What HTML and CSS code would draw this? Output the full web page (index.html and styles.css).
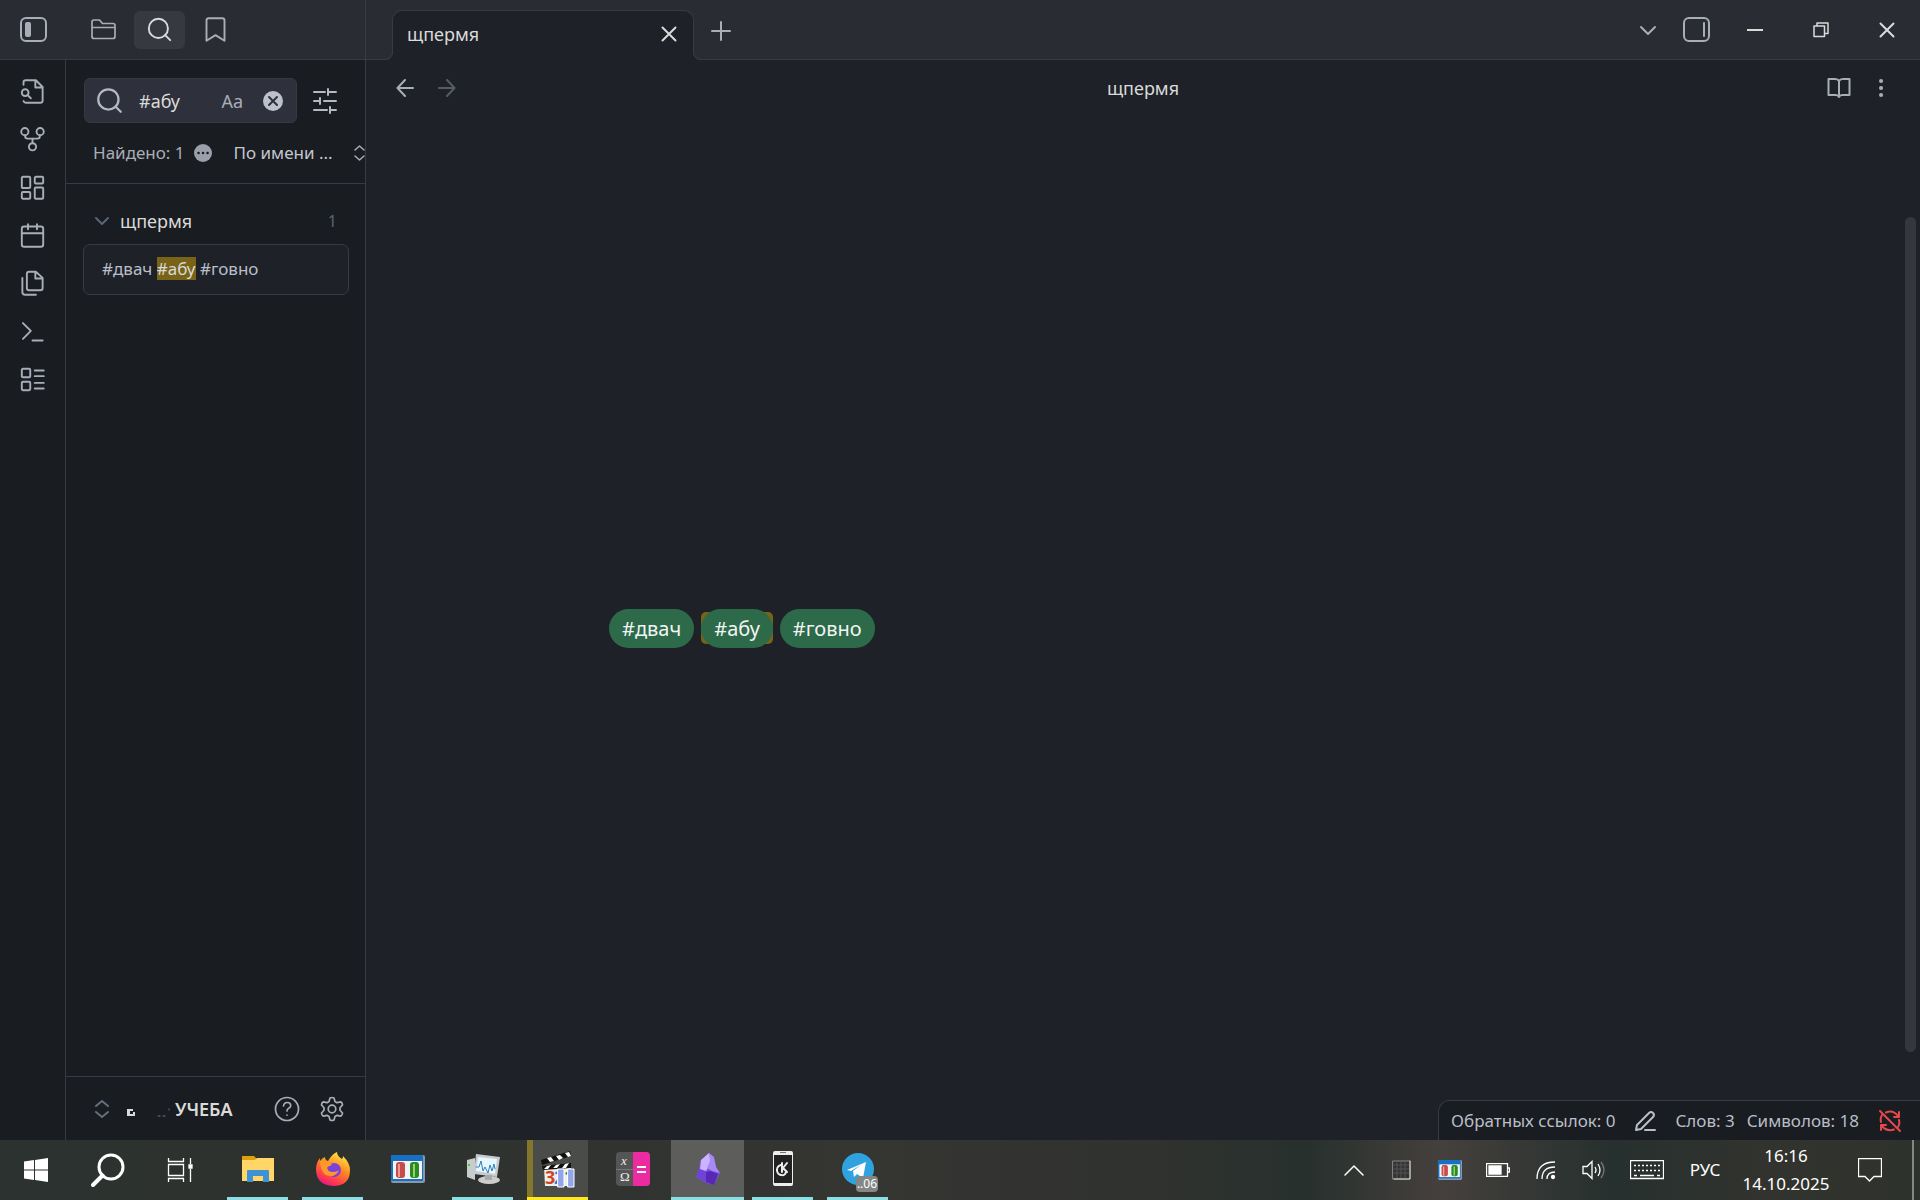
FILE: index.html
```
<!DOCTYPE html>
<html lang="ru">
<head>
    <meta charset="UTF-8">
    <meta name="viewport" content="width=device-width, initial-scale=1.0">
    <title>щпермя</title>
    <link rel="stylesheet" href="styles.css">
</head>
<body>
    <header class="titlebar">
        <div class="titlebar-left">
            <button class="panel-toggle" aria-label="Левая панель">
                <svg width="27" height="25" viewBox="0 0 27 25"><rect x="1" y="1" width="25" height="23" rx="5" /><rect x="5" y="5" width="6" height="15" rx="2" fill="currentColor" stroke="none" /></svg>
            </button>
            <button class="side-tab" aria-label="Файлы">
                <svg width="27" height="27" viewBox="0 0 27 27"><path d="M2 20.500V6q0-2 2-2h5.500l3 3.500H23q2 0 2 2v11q0 2-2 2H4q-2 0-2-2zM2 11.500h23" /></svg>
            </button>
            <button class="side-tab active" aria-label="Поиск">
                <svg width="27" height="27" viewBox="0 0 24 24"><circle cx="11" cy="11" r="8.500" /><path d="M21.500 21.500l-4.500-4.500" /></svg>
            </button>
            <button class="side-tab" aria-label="Закладки">
                <svg width="27" height="27" viewBox="0 0 24 24"><path d="M20 22l-8-5-8 5V4q0-2 2-2h12q2 0 2 2z" /></svg>
            </button>
        </div>
        <div class="tabs">
            <div class="tab">
                <span>щпермя</span>
                <button aria-label="Закрыть вкладку"><svg width="16" height="16" viewBox="0 0 16 16"><path d="M1.500 1.500l13 13M14.500 1.500l-13 13" /></svg></button>
            </div>
            <button class="new-tab" aria-label="Новая вкладка"><svg width="20" height="20" viewBox="0 0 20 20"><path d="M10 1v18M1 10h18" /></svg></button>
        </div>
        <div class="titlebar-right">
            <button class="tab-list" aria-label="Список вкладок"><svg width="18" height="18" viewBox="0 0 18 18"><path d="M2 6l7 7 7-7" /></svg></button>
            <button class="right-toggle" aria-label="Правая панель"><svg width="27" height="25" viewBox="0 0 27 25"><rect x="1" y="1" width="25" height="23" rx="5" /><rect x="20" y="5" width="2" height="15" rx="1" fill="currentColor" stroke="none" /></svg></button>
            <button class="window-button" aria-label="Свернуть"><svg width="16" height="16" viewBox="0 0 16 16"><path d="M0 8h16" /></svg></button>
            <button class="window-button" aria-label="Восстановить"><svg width="16" height="16" viewBox="0 0 16 16"><path d="M1 4h10.500v10.500H1zM4 4V1h11v10.500h-3.500" stroke-width="1.500" /></svg></button>
            <button class="window-button" aria-label="Закрыть"><svg width="16" height="16" viewBox="0 0 16 16"><path d="M1.500 1.500l13 13M14.500 1.500l-13 13" /></svg></button>
        </div>
    </header>

    <div class="workspace">
        <nav class="ribbon">
            <button aria-label="Быстрый переход"><svg width="27" height="27" viewBox="0 0 24 24"><path d="M4 6V4q0-2 2-2h9l6 6v12q0 2-2 2H6q-1.500 0-2-1.500M14.500 2v6.500H21" /><circle cx="5.500" cy="13" r="3" /><path d="M7.500 15l3 3" /></svg></button>
            <button aria-label="Граф"><svg width="27" height="27" viewBox="0 0 24 24"><circle cx="12" cy="18.500" r="3.200" /><circle cx="5.200" cy="5" r="3.200" /><circle cx="18.800" cy="5" r="3.200" /><path d="M18.500 8.200v1q0 2-2 2h-9q-2 0-2-2v-1M12 11.500v3.500" /></svg></button>
            <button aria-label="Холст"><svg width="27" height="27" viewBox="0 0 24 24"><rect x="2.500" y="2.500" width="7.500" height="10" rx="1" /><rect x="14" y="2.500" width="7.500" height="6" rx="1" /><rect x="14" y="12" width="7.500" height="10" rx="1" /><rect x="2.500" y="16" width="7.500" height="6" rx="1" /></svg></button>
            <button aria-label="Заметка дня"><svg width="27" height="27" viewBox="0 0 24 24"><rect x="2.500" y="4" width="19" height="18" rx="2" /><path d="M2.500 10h19M8 2v4.500M16 2v4.500" /></svg></button>
            <button aria-label="Шаблон"><svg width="27" height="27" viewBox="0 0 24 24"><path d="M15 1.500H9q-2 0-2 2v12.500q0 2 2 2h10q2 0 2-2V7zM14.500 1.500v6H21M3 7v12.500q0 2.500 2.500 2.500H15" /></svg></button>
            <button aria-label="Команды"><svg width="27" height="27" viewBox="0 0 24 24"><path d="M3.500 4.500l7 7-7 7M12 20h9" /></svg></button>
            <button aria-label="Базы"><svg width="27" height="27" viewBox="0 0 24 24"><rect x="2.500" y="2.500" width="7.500" height="7.500" rx="1" /><rect x="2.500" y="14" width="7.500" height="7.500" rx="1" /><path d="M14 4h8M14 9h8M14 15h8M14 20h8" /></svg></button>
        </nav>

        <aside class="sidebar">
            <div class="search-row">
                <div class="search-box">
                    <svg width="27" height="27" viewBox="0 0 24 24"><circle cx="11" cy="11" r="9" /><path d="M22 22l-4.500-4.500" /></svg>
                    <input type="text" value="#абу" aria-label="Поиск">
                    <button class="match-case" aria-label="Учитывать регистр">Aa</button>
                    <button aria-label="Очистить"><svg width="20" height="20" viewBox="0 0 20 20"><circle cx="10" cy="10" r="10" fill="#bcc1cc" stroke="none" /><path d="M6 6l8 8M14 6l-8 8" stroke="#2e313b" /></svg></button>
                </div>
                <button class="search-settings" aria-label="Настройки поиска"><svg width="24" height="26" viewBox="0 0 24 26"><path d="M1 4h11M15 1v6M16 4h7M1 13h6M7 10v6M11 13h12M1 22h13M17 19v6M17 22h6" /></svg></button>
            </div>
            <div class="result-info">
                <span>Найдено: 1</span>
                <svg width="18" height="18" viewBox="0 0 18 18"><circle cx="9" cy="9" r="9" fill="#9a9fa9" stroke="none" /><path d="M4.500 9h.1M9 9h.1M13.500 9h.1" stroke="#191c20" stroke-width="2.500" /></svg>
                <select aria-label="Сортировка"><option>По имени ...</option></select>
                <svg class="sort-arrows" width="11" height="18" viewBox="0 0 11 18"><path d="M1 6l4.500-4L10 6M1 12l4.500 4 4.500-4" /></svg>
            </div>
            <div class="results">
                <div class="result-title">
                    <svg width="16" height="16" viewBox="0 0 16 16"><path d="M2 5l6 6 6-6" /></svg>
                    <span>щпермя</span>
                    <small>1</small>
                </div>
                <div class="result-match">#двач <mark>#абу</mark> #говно</div>
            </div>
            <footer class="vault">
                <svg class="vault-arrows" width="14" height="20" viewBox="0 0 14 20"><path d="M1 7l6-5 6 5M1 13l6 5 6-5" /></svg>
                <svg class="vault-mark" width="48" height="22" viewBox="0 0 48 22"><path d="M2 11h6v2H5v3h3v-2h2v4H2z" fill="#dadada" stroke="none" /><path d="M33 18h2M38 18h2M44 11v1" stroke="#777" stroke-width="1" /></svg>
                <strong>УЧЕБА</strong>
                <button aria-label="Справка"><svg width="26" height="26" viewBox="0 0 26 26"><circle cx="13" cy="13" r="11.500" /><path d="M9.500 10q.5-3.500 3.800-3.500 3.400 0 3.400 3.200 0 1.500-2 2.600-1.700 1-1.700 2.700M13 19v.1" /></svg></button>
                <button aria-label="Настройки"><svg width="26" height="26" viewBox="0 0 26 26"><path d="M11 2q2-1 4 0l1 3.500 2 1.200 3.700-.9q1.700 1 1.800 3.200L21 11.800v2.400l2.500 2.800q-.1 2.200-1.800 3.200l-3.700-.9-2 1.200-1 3.500q-2 1-4 0l-1-3.500-2-1.200-3.700.9Q2.600 19.200 2.500 17L5 14.200v-2.400L2.500 9q.1-2.200 1.800-3.200l3.700.9 2-1.200z" /><circle cx="13" cy="13" r="3.800" /></svg></button>
            </footer>
        </aside>

        <main class="view">
            <div class="view-header">
                <div class="view-nav">
                    <button aria-label="Назад"><svg width="18" height="18" viewBox="0 0 18 18"><path d="M17 9H2M9 1L1.500 9 9 17" /></svg></button>
                    <button aria-label="Вперёд" disabled><svg width="18" height="18" viewBox="0 0 18 18"><path d="M1 9h15M9 1l7.500 8L9 17" /></svg></button>
                </div>
                <span class="view-title">щпермя</span>
                <div class="view-actions">
                    <button aria-label="Режим чтения"><svg width="24" height="22" viewBox="0 0 24 22"><path d="M12 4v16M12 4q-1-2-4-2H1.500v16H9q2 0 3 2 1-2 3-2h7.500V2H16q-3 0-4 2z" /></svg></button>
                    <button aria-label="Ещё"><svg width="6" height="20" viewBox="0 0 6 20"><path d="M3 3h.1M3 10h.1M3 17h.1" stroke-width="4" /></svg></button>
                </div>
            </div>
            <div class="editor">
                <p class="note"><a href="#" class="tag">#двач</a><span class="found"><a href="#" class="tag">#абу</a></span><a href="#" class="tag">#говно</a></p>
                <div class="scroll-thumb"></div>
            </div>
            <div class="status-bar">
                <span>Обратных ссылок: 0</span>
                <svg width="22" height="22" viewBox="0 0 22 22"><path d="M2 20l1-5L15 3q2-2 4 0t0 4L7 19zM11 20h10" /></svg>
                <span>Слов: 3</span>
                <span>Символов: 18</span>
                <svg class="sync-off" width="24" height="24" viewBox="0 0 24 24"><path d="M2 2l20 20M8 3.500q7-3 12 3.500M21 3v5h-5M3 13q-1-4 1-7M21 11q1 4-1 7M3 21v-5h5M4 17q5 6 12 3.500" /></svg>
            </div>
        </main>
    </div>

    <div class="taskbar">
        <button class="system" aria-label="Пуск"><svg width="24" height="24" viewBox="0 0 24 24"><path d="M0 3.500l10-1.500v9.500H0zM11 2l13-2v11.500H11zM0 12.500h10V22L0 20.500zM11 12.500h13V24l-13-2z" fill="#fff" stroke="none" /></svg></button>
        <button class="system" aria-label="Поиск в системе"><svg width="34" height="34" viewBox="0 0 34 34"><circle cx="20" cy="14" r="12" stroke-width="3" /><path d="M11.500 22.500L2 32" stroke-width="4" /></svg></button>
        <button class="system" aria-label="Представление задач"><svg class="thin" width="26" height="24" viewBox="0 0 26 24"><path d="M1.500 0v3.500h15V0M1.500 6.500h15v11h-15zM1.500 24v-3.500h15V24M23.500 0v6M23.500 11v13" /><path d="M22 7h3v3h-3z" fill="#fff" /></svg></button>

        <div class="apps">
            <button class="app running" aria-label="Проводник"><svg width="34" height="34" viewBox="0 0 34 34"><g stroke="none"><path d="M1 4h12l3 3h17v21H1z" fill="#dea00d" /><path d="M1 8h13l2-2h17v23H1z" fill="#ffd667" /><path d="M6 30V19q0-1 1-1h20q1 0 1 1v11h-6v-6H12v6z" fill="#3e92d6" /></g></svg></button>
            <button class="app running" aria-label="Firefox"><svg width="36" height="36" viewBox="0 0 36 36">
                <defs><linearGradient id="fire" x1=".8" y1="0" x2=".3" y2="1"><stop offset="0" stop-color="#fff04b" /><stop offset=".45" stop-color="#ff8a20" /><stop offset=".8" stop-color="#ff3a4f" /><stop offset="1" stop-color="#e31587" /></linearGradient></defs>
                <g stroke="none"><path d="M22 1q0 4 5 7 1-1 1-3 7 7 7 14 0 16-17 16Q1 34 1 18q0-6 4-11v3q2-3 5-4 0 3 3 4 4-7 9-9z" fill="url(#fire)" /><circle cx="19" cy="19" r="7" fill="#7a42da" /><path d="M5 10q8-1 12 4l-5 2q0 5 6 5 4 0 6-2-3 7-10 6Q6 24 5 10z" fill="#ff982a" /></g></svg></button>
            <button class="app" aria-label="Заряд"><svg width="34" height="28" viewBox="0 0 34 28"><g id="cells" stroke="none"><rect width="34" height="28" rx="2" fill="#8997aa" /><rect width="32" height="26" rx="1" fill="#1870c2" /><rect x="2" y="6" width="29" height="18" fill="#f1f4f6" /><rect x="5" y="7" width="9" height="16" rx="3" fill="#c64c4c" /><rect x="7" y="9" width="2" height="13" fill="#ef9990" /><rect x="19" y="7" width="9" height="16" rx="3" fill="#2a8b25" /><rect x="22" y="9" width="2" height="13" fill="#9bd26f" /></g></svg></button>
            <button class="app running" aria-label="Монитор"><svg width="34" height="34" viewBox="0 0 34 34"><g stroke="none"><path d="M1 8l8-2v22l-8-3z" fill="#c9cccd" /><path d="M2 12h2v2H2z" fill="#34d821" /><path d="M10 2l24 3-3 20-23-3z" fill="#c5cbcf" /><path d="M12 5l19 2-2 15-19-3z" fill="#e8f6fe" /><ellipse cx="23" cy="28" rx="11" ry="4" fill="#cdcdcd" /><path d="M19 23h7v5h-7z" fill="#aaa" /></g><path d="M10 15h3l2-6 2 10 2-4 3 6 2-8 2 6 2-7 1 5" stroke="#2b83bd" stroke-width="1" /></svg></button>
            <button class="app paused" aria-label="Видеоплеер"><svg width="36" height="38" viewBox="0 0 36 38"><g stroke="none"><path d="M4 16h27v20H5z" fill="#eee" /><path d="M1 10l29-9 1 5-29 9z" fill="#111" /><path d="M2 16l29-3v5L3 20z" fill="#111" /><path d="M7 8l4-1 3 4-4 1zM16 6l4-1 3 3-4 2zM25 3l4-1 2 4-3 1zM7 16l4-1-3 4H4zM16 15l4-1-3 4h-4zM25 14l4-1-3 5h-4z" fill="#fff" /><g class="countdown"><text x="5" y="34" fill="#cf461e">3</text><text x="14" y="34" fill="#397acb">2</text><text x="24" y="33" fill="#278c35">1</text></g><path d="M18 19h6v18h-6zM28 19h6v18h-6z" fill="#91a5ed" stroke="#fff" stroke-width="1" /></g></svg></button>
            <button class="app" aria-label="Математика"><svg width="34" height="34" viewBox="0 0 34 34"><g stroke="none"><rect width="34" height="34" rx="4" fill="#555" /><path d="M17 0h13q4 0 4 4v26q0 4-4 4H17z" fill="#ec2aa1" /><path d="M0 17h17v1H0z" fill="#777" /><g class="math"><text x="5" y="13" font-style="italic">x</text><text x="4" y="29">Ω</text></g><path d="M21 14h9v2h-9zM21 19h9v2h-9z" fill="#fff" /></g></svg></button>
            <button class="app running current" aria-label="Obsidian"><svg width="26" height="34" viewBox="0 0 26 34"><g stroke="none"><path d="M14 1L5 9 4 17l-3 8 10 6 8 2 6-12-4-6-2-10z" fill="#7c4ce0" /><path d="M14 1L6 8l-1 9 6 2 5-8z" fill="#cbb4ff" /><path d="M14 1l5 4 2 10 4 6-8-2-5-3 3-7z" fill="#a988f3" /><path d="M4 17l7 3v10L1 25z" fill="#6f43d8" /><path d="M11 20l5-1 7 3-4 11-8-3z" fill="#5728b4" /></g></svg></button>
            <button class="app running" aria-label="KDE Connect"><svg width="20" height="36" viewBox="0 0 20 36"><g stroke="none"><rect width="20" height="35" rx="2" fill="#eee" /><rect x="7" y="1" width="6" height="1" fill="#777" /><rect x="1" y="4" width="18" height="28" fill="#222" /></g><path d="M8 14q-4 1-4 5t4 5 5-3" stroke="#eee" stroke-dasharray="2 1" /><path d="M9 12v9M14 12l-4 5 4 4" stroke="#eee" /></svg></button>
            <button class="app running telegram" aria-label="Telegram"><svg width="34" height="34" viewBox="0 0 34 34"><g stroke="none"><circle cx="17" cy="17" r="16" fill="#30a3df" /><path d="M6 18L25 10l-3 16-6-4-3 3-1-6 8-6-10 6z" fill="#fff" /></g></svg><span class="badge">..06</span></button>
        </div>

        <div class="tray">
            <button class="tray-button" aria-label="Скрытые значки"><svg width="20" height="12" viewBox="0 0 20 12"><path d="M1 11l9-9 9 9" stroke-width="1.500" /></svg></button>
            <button class="tray-button" aria-label="Процессор"><svg width="20" height="20" viewBox="0 0 20 20"><rect x="1" y="1" width="17" height="18" fill="#333" stroke="#888" stroke-width="1" /><path d="M5 2v16M9 2v16M13 2v16M2 5h15M2 9h15M2 13h15" stroke="#555" stroke-width="1" /><path d="M18 1v18H2" stroke="#ddd" stroke-width="1" /></svg></button>
            <button class="tray-button" aria-label="Ячейки"><svg width="24" height="20" viewBox="0 0 34 28"><use href="#cells" /></svg></button>
            <button class="tray-button" aria-label="Батарея"><svg class="thin" width="24" height="14" viewBox="0 0 24 14"><path d="M.5.5h21v13H.5zM22 5h1.500v4H22" /><path d="M3 3h12v8H3z" fill="#fff" /></svg></button>
            <button class="tray-button" aria-label="Wi-Fi"><svg class="thin" width="20" height="20" viewBox="0 0 20 20"><path d="M1 19Q1 2 19 2M6 19Q6 7 19 7M11 19q0-7 8-7" /><circle cx="17" cy="17" r="1.500" fill="#fff" /></svg></button>
            <button class="tray-button" aria-label="Громкость"><svg class="thin" width="24" height="20" viewBox="0 0 24 20"><path d="M1 6.500h4l5-5v17l-5-5H1zM13 7q2 3 0 6M16 4q4 6 0 12" /><path d="M19 2q6 8 0 16" stroke="#777" /></svg></button>
            <button class="keyboard" aria-label="Клавиатура"><svg class="thin" width="34" height="20" viewBox="0 0 34 20"><path d="M.5.500h33v18H.500zM4 15.500h3M10 15.500h14M27 15.500h3" /><path d="M4 5.500h26M4 10.500h26" stroke-dasharray="2 2" /></svg></button>
            <button class="language">РУС</button>
            <button class="clock"><time>16:16</time><time>14.10.2025</time></button>
            <button class="notices" aria-label="Уведомления"><svg class="thin" width="24" height="24" viewBox="0 0 24 24"><path d="M.500.500h23v18H16l-4.500 4.500L7 18.500H.500z" /></svg></button>
            <div class="show-desktop"></div>
        </div>
    </div>
</body>
</html>
```

FILE: styles.css
```
* {
    box-sizing: border-box;
}

body {
    margin: 0;
    height: 100vh;
    display: flex;
    flex-direction: column;
    overflow: hidden;
    background: #1e2128;
    color: #dadada;
    font-family: "Noto Sans", "Open Sans", sans-serif;
    font-size: 18px;
    line-height: 24px;
}

button, input, select {
    margin: 0;
    padding: 0;
    border: none;
    background: none;
    color: inherit;
    font: inherit;
}

button {
    display: flex;
    align-items: center;
    justify-content: center;
}

svg {
    display: block;
    flex-shrink: 0;
    fill: none;
    stroke: currentColor;
    stroke-width: 2;
    stroke-linecap: round;
    stroke-linejoin: round;
}

/* title bar */
.titlebar {
    height: 60px;
    flex-shrink: 0;
    display: flex;
    background: #2a2c34;
    border-bottom: 1px solid #383b41;
    color: #a9adb8;
}

.titlebar-left {
    width: 366px;
    flex-shrink: 0;
    display: flex;
    align-items: center;
    border-right: 1px solid #383b41;
}

.panel-toggle {
    width: 66px;
    margin-right: 12px;
}

.side-tab {
    width: 51px;
    height: 38px;
    margin-right: 5px;
    border-radius: 6px;
}

.side-tab svg {
    stroke-width: 1.7;
}

.side-tab.active {
    background: #363942;
    color: #dadada;
}

.tabs {
    flex: 1;
    display: flex;
    align-items: flex-end;
    padding-left: 26px;
}

.tab {
    position: relative;
    width: 302px;
    height: 50px;
    margin-bottom: -1px;
    padding: 0 16px 3px 14px;
    display: flex;
    align-items: center;
    justify-content: space-between;
    background: #1e2128;
    border: 1px solid #383b41;
    border-bottom: none;
    border-radius: 10px 10px 0 0;
    color: #dadada;
}

.tab::before,
.tab::after {
    content: "";
    position: absolute;
    bottom: 0;
    width: 8px;
    height: 8px;
    border-bottom: 1px solid #383b41;
}

.tab::before {
    right: 100%;
    border-right: 1px solid #383b41;
    border-bottom-right-radius: 8px;
    box-shadow: 3px 3px 0 #1e2128;
    clip-path: inset(0 -1px 0 0);
}

.tab::after {
    left: 100%;
    border-left: 1px solid #383b41;
    border-bottom-left-radius: 8px;
    box-shadow: -3px 3px 0 #1e2128;
    clip-path: inset(0 0 0 -1px);
}

.new-tab {
    width: 54px;
    height: 56px;
}

.titlebar-right {
    display: flex;
    align-items: center;
}

.tab-list {
    width: 44px;
}

.right-toggle {
    width: 52px;
}

.window-button {
    width: 66px;
    height: 58px;
    color: #dadada;
}

/* left side */
.workspace {
    flex: 1;
    min-height: 0;
    display: flex;
}

.ribbon {
    width: 66px;
    flex-shrink: 0;
    display: flex;
    flex-direction: column;
    padding-top: 7px;
    background: #191c20;
    border-right: 1px solid #383b41;
    color: #a9adb8;
}

.ribbon button {
    height: 48px;
}

.ribbon svg {
    stroke-width: 1.7;
}

.sidebar {
    width: 300px;
    flex-shrink: 0;
    display: flex;
    flex-direction: column;
    background: #191c20;
    border-right: 1px solid #383b41;
}

.search-row {
    display: flex;
    padding: 18px 22px 0 18px;
    color: #b3b8c3;
}

.search-box {
    flex: 1;
    min-width: 0;
    height: 45px;
    display: flex;
    align-items: center;
    padding: 0 13px 0 11px;
    background: #2e313b;
    border: 1px solid #363942;
    border-radius: 6px;
}

.search-box input {
    flex: 1;
    width: 0;
    min-width: 0;
    padding-left: 16px;
    color: #dadada;
    outline: none;
}

.match-case {
    margin-right: 20px;
    font-size: 18px;
    color: #a9adb8;
}

.search-settings {
    width: 36px;
    margin-left: 10px;
}

.result-info {
    height: 61px;
    display: flex;
    align-items: center;
    padding-left: 27px;
    border-bottom: 1px solid #383b41;
    font-size: 17px;
    white-space: nowrap;
    color: #a9adb8;
}

.result-info svg {
    margin-left: 9px;
}

.result-info select {
    appearance: none;
    flex: 1;
    width: 0;
    min-width: 0;
    margin-left: 22px;
    color: #c3c7ce;
}

.result-info .sort-arrows {
    margin-left: 1px;
    stroke-width: 1.5;
}

.results {
    flex: 1;
    padding: 25px 16px 0 17px;
}

.result-title {
    display: flex;
    align-items: center;
    height: 24px;
    padding: 0 12px 0 11px;
    color: #5c6578;
}

.result-title span {
    flex: 1;
    margin-left: 10px;
    color: #dadada;
}

.result-title small {
    font-size: 16px;
}

.result-match {
    height: 51px;
    margin-top: 11px;
    padding: 12px 18px;
    background: #1e2128;
    border: 1px solid #383b41;
    border-radius: 7px;
    font-size: 17px;
    color: #b9bec8;
}

mark {
    background: #786317;
    color: #dadada;
}

.vault {
    height: 64px;
    display: flex;
    align-items: center;
    padding: 0 20px 0 29px;
    border-top: 1px solid #383b41;
    color: #a9adb8;
}

.vault strong {
    flex: 1;
    font-weight: 600;
    color: #dadada;
}

.vault-arrows {
    color: #666e7e;
}

.vault-mark {
    margin: 0 2px 0 16px;
}

.vault button {
    margin-left: 19px;
}

.vault button svg {
    stroke-width: 1.7;
}

/* note */
.view {
    position: relative;
    flex: 1;
    min-width: 0;
    display: flex;
    flex-direction: column;
}

.view-header {
    height: 56px;
    display: grid;
    grid-template-columns: 1fr auto 1fr;
    align-items: center;
    padding: 0 30px;
    color: #a9adb8;
}

.view-nav,
.view-actions {
    display: flex;
    gap: 24px;
}

.view-nav button:disabled {
    color: #575b63;
}

.view-title {
    color: #dadada;
}

.view-actions {
    justify-content: flex-end;
    gap: 27px;
    padding-right: 6px;
}

.editor {
    flex: 1;
    display: flex;
    flex-direction: column;
    justify-content: center;
}

.note {
    width: 100%;
    max-width: 1068px;
    margin: 0 auto;
    display: flex;
    align-items: center;
    gap: 7px;
    font-size: 20px;
}

.tag {
    display: block;
    padding: 6px 13px;
    border-radius: 20px;
    background: #2d6a4a;
    color: #f2f5f3;
    line-height: 27px;
    text-decoration: none;
}

.found {
    display: block;
    height: 32px;
    border-radius: 5px;
    background: #786317;
}

.found .tag {
    margin-top: -3px;
}

.scroll-thumb {
    position: absolute;
    top: 157px;
    right: 4px;
    bottom: 88px;
    width: 11px;
    border-radius: 6px;
    background: #34373d;
}

.status-bar {
    position: absolute;
    right: 0;
    bottom: 0;
    height: 40px;
    display: flex;
    align-items: center;
    gap: 12px;
    padding: 0 18px 0 12px;
    background: #191c20;
    border: 1px solid #383b41;
    border-width: 1px 0 0 1px;
    border-radius: 12px 0 0 0;
    font-size: 17px;
    color: #b9bec8;
}

.status-bar svg {
    margin: 0 7px;
}

.status-bar .sync-off {
    margin-right: 0;
    color: #e5484d;
}

/* taskbar */
.taskbar {
    height: 60px;
    flex-shrink: 0;
    display: flex;
    background: linear-gradient(90deg, #2c322f 0%, #2e322f 22%, #353532 45%, #30322f 60%, #27302d 68%, #45403d 75%, #26302e 84%, #32332e 92%, #2e322d 100%);
    color: #fff;
}

.system {
    width: 72px;
}

.thin {
    stroke-width: 1.3;
    stroke-linecap: butt;
    stroke-linejoin: miter;
}

.apps {
    flex: 1;
    display: flex;
    padding-left: 4px;
}

.app {
    position: relative;
    width: 61px;
    margin: 0 7px;
    border-bottom: 3px solid transparent;
}

.running {
    border-color: #8adfe5;
}

.paused {
    border-color: #ffe81c;
    background: linear-gradient(90deg, #82772d 6px, #4a4c49 6px);
}

.current {
    width: 73px;
    margin: 0 1px;
    background: #5d5d5c;
}

.countdown {
    font-size: 18px;
    font-weight: 700;
}

.math {
    font-family: "Liberation Serif", serif;
    font-size: 13px;
    fill: #eee;
}

.badge {
    position: absolute;
    right: 10px;
    bottom: 5px;
    width: 22px;
    border-radius: 4px;
    background: #858787;
    font-size: 12px;
    line-height: 16px;
}

.tray {
    display: flex;
    font-size: 17px;
}

.tray-button {
    width: 48px;
}

.keyboard {
    width: 58px;
}

.language {
    width: 58px;
}

.clock {
    width: 104px;
    flex-direction: column;
    line-height: 28px;
}

.notices {
    width: 64px;
}

.show-desktop {
    width: 8px;
    margin-left: 10px;
    border-left: 2px solid #858783;
}
```
